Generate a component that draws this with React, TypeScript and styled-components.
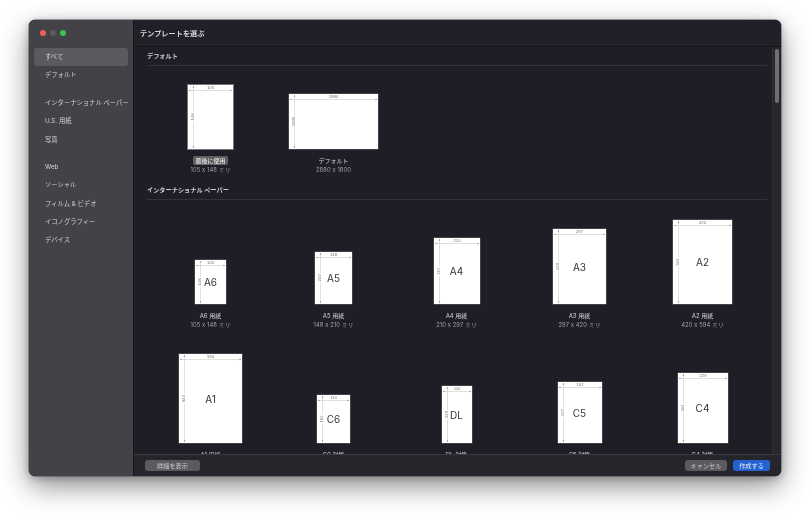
import React from 'react'
import styled, { createGlobalStyle } from 'styled-components'

type PaperSpec = {
  name?: string
  label: string
  size: string
  dimX: string
  dimY: string
  w: number
  h: number
  recent?: boolean
}

const GlobalStyle = createGlobalStyle`
  html, body {
    margin: 0;
    padding: 0;
    background: #fff;
    font-family: Inter, "Noto Sans CJK JP", "Liberation Sans", sans-serif;
  }
`

const Page = styled.div`
  width: 810px;
  height: 515px;
  box-sizing: border-box;
  padding: 20px 29px 39px;
  overflow: hidden;
`

const Window = styled.div`
  display: flex;
  height: 100%;
  border-radius: 6px;
  overflow: hidden;
  background: #1d1e26;
  box-shadow: 0 0 0 0.5px #55555a, 0 10px 28px rgba(0, 0, 0, 0.45), 0 2px 8px rgba(0, 0, 0, 0.25);
  filter: blur(0.4px);
  will-change: transform;
`

const Sidebar = styled.nav`
  flex: 0 0 105px;
  min-width: 0;
  width: 105px;
  display: flex;
  flex-direction: column;
  box-sizing: border-box;
  padding: 27.5px 5px 0;
  background: #434247;
  border-right: 1px solid #17171c;
  position: relative;
`

const Lights = styled.div`
  position: absolute;
  top: 10px;
  left: 11px;
  display: flex;
  gap: 4px;
`

const Light = styled.span<{ $color: string }>`
  width: 6px;
  height: 6px;
  border-radius: 50%;
  background: ${(p) => p.$color};
`

const NavItem = styled.div<{ $active?: boolean; $gap?: number }>`
  height: 18.3px;
  line-height: 18px;
  margin-top: ${(p) => p.$gap ?? 0}px;
  padding-left: 11px;
  border-radius: 3px;
  font-size: 6.3px;
  white-space: nowrap;
  color: #d2d2d4;
  background: ${(p) => (p.$active ? '#5b5a5f' : 'transparent')};
`

const Main = styled.main`
  flex: 1;
  min-width: 0;
  display: flex;
  flex-direction: column;
`

const Header = styled.header`
  flex: 0 0 27px;
  box-sizing: border-box;
  display: flex;
  align-items: center;
  padding-left: 6px;
  background: #1f2028;
  border-bottom: 1px solid #15151a;
  font-size: 7.2px;
  font-weight: 700;
  color: #d8d8da;
`

const Body = styled.div`
  flex: 1;
  min-height: 0;
  display: flex;
`

const Scroller = styled.div`
  flex: 1;
  min-width: 0;
  overflow: hidden;
`

const ScrollTrack = styled.div`
  flex: 0 0 8px;
  box-sizing: border-box;
  padding: 2px 2px 0;
  background: #26272c;
  border-left: 1px solid #303137;
`

const ScrollThumb = styled.div`
  width: 4px;
  height: 54px;
  border-radius: 2px;
  background: #707074;
`

const Section = styled.section<{ $gap?: number }>`
  margin: ${(p) => p.$gap ?? 0}px 5px 0 13px;
`

const SectionHead = styled.h2`
  margin: 0;
  height: 19px;
  box-sizing: border-box;
  line-height: 18px;
  border-bottom: 1px solid #32333a;
  font-size: 6.2px;
  font-weight: 700;
  color: #cdcdd0;
`

const CardGrid = styled.div<{ $top: number }>`
  display: grid;
  grid-template-columns: repeat(5, 123px);
  row-gap: 24px;
  align-items: end;
  padding: ${(p) => p.$top}px 0 0 2px;
`

const Card = styled.div`
  display: flex;
  flex-direction: column;
  align-items: center;
`

const Sheet = styled.div<{ $recent?: boolean }>`
  position: relative;
  box-sizing: border-box;
  background: #fff;
  box-shadow: 0 0 0 ${(p) => (p.$recent ? '1px #77777b' : '0.5px #66666a')};
`

const SheetName = styled.span`
  position: absolute;
  inset: 0;
  display: flex;
  align-items: center;
  justify-content: center;
  font-family: Inter, "Liberation Sans", sans-serif;
  font-size: 10px;
  color: #333;
`

const Caption = styled.div`
  margin-top: 6px;
  height: 10px;
  display: flex;
  align-items: center;
`

const CaptionText = styled.span<{ $recent?: boolean }>`
  font-size: 6px;
  line-height: 9px;
  font-weight: ${(p) => (p.$recent ? 500 : 400)};
  color: #d2d2d4;
  white-space: nowrap;
  ${(p) => p.$recent && 'padding: 0 2px; border-radius: 2px; background: #5f5f63; color: #e6e6e6;'}
`

const SizeText = styled.div`
  height: 10px;
  line-height: 10px;
  font-size: 5.8px;
  letter-spacing: 0.1px;
  color: #a0a0a4;
  white-space: nowrap;
`

const Footer = styled.footer`
  flex: 0 0 22px;
  box-sizing: border-box;
  display: flex;
  align-items: center;
  padding: 0 11px 0 11px;
  background: #25262c;
  border-top: 1px solid #3a3b40;
  position: relative;
`

const Button = styled.button<{ $primary?: boolean; $width: number }>`
  width: ${(p) => p.$width}px;
  height: 11px;
  padding: 0;
  border: 0;
  border-radius: 3px;
  font-family: inherit;
  font-size: 6.2px;
  line-height: 11px;
  color: ${(p) => (p.$primary ? '#e4ecfb' : '#c8c8ca')};
  background: ${(p) => (p.$primary ? '#2463cf' : '#5a5a5f')};
`

const Spacer = styled.div`
  flex: 1;
`

const ButtonGroup = styled.div`
  display: flex;
  gap: 6px;
`

const Guides = ({ w, h, dimX, dimY }: { w: number; h: number; dimX: string; dimY: string }) => {
  const o = 5.5
  return (
    <svg
      width={w}
      height={h}
      viewBox={`0 0 ${w} ${h}`}
      style={{ position: 'absolute', left: 0, top: 0 }}
    >
      <line x1={1} y1={o} x2={w - 1} y2={o} stroke="#d2d2d2" strokeWidth={0.7} />
      <line x1={o} y1={1} x2={o} y2={h - 1} stroke="#d2d2d2" strokeWidth={0.7} />
      <path d={`M1 ${o}l1.4 -.8v1.6z M${w - 1} ${o}l-1.4 -.8v1.6z`} fill="#777" />
      <path d={`M${o} 1l-.8 1.4h1.6z M${o} ${h - 1}l-.8 -1.4h1.6z`} fill="#777" />
      <text
        x={w / 2}
        y={4.2}
        textAnchor="middle"
        fontSize={4.2}
        fill="#777"
        fontFamily="Liberation Sans, sans-serif"
      >
        {dimX}
      </text>
      <g transform={`translate(${o - 0.6} ${h / 2}) rotate(-90)`}>
        <rect x={-5} y={-3} width={10} height={4} fill="#fff" />
        <text
          x={0}
          y={0.6}
          textAnchor="middle"
          fontSize={4.2}
          fill="#777"
          fontFamily="Liberation Sans, sans-serif"
        >
          {dimY}
        </text>
      </g>
    </svg>
  )
}

const PaperCard = ({ name, label, size, dimX, dimY, w, h, recent }: PaperSpec) => (
  <Card>
    <Sheet $recent={recent} style={{ width: w, height: h }}>
      <Guides w={w} h={h} dimX={dimX} dimY={dimY} />
      {name && <SheetName>{name}</SheetName>}
    </Sheet>
    <Caption>
      <CaptionText $recent={recent}>{label}</CaptionText>
    </Caption>
    <SizeText>{size}</SizeText>
  </Card>
)

const defaults: PaperSpec[] = [
  { label: '最後に使用', size: '105 x 148 ミリ', dimX: '105', dimY: '148', w: 45, h: 64, recent: true },
  { label: 'デフォルト', size: '2880 x 1800', dimX: '2880', dimY: '1800', w: 89, h: 55 },
]

const international: PaperSpec[] = [
  { name: 'A6', label: 'A6 用紙', size: '105 x 148 ミリ', dimX: '105', dimY: '148', w: 31, h: 44 },
  { name: 'A5', label: 'A5 用紙', size: '148 x 210 ミリ', dimX: '148', dimY: '210', w: 37, h: 52 },
  { name: 'A4', label: 'A4 用紙', size: '210 x 297 ミリ', dimX: '210', dimY: '297', w: 46, h: 66 },
  { name: 'A3', label: 'A3 用紙', size: '297 x 420 ミリ', dimX: '297', dimY: '420', w: 53, h: 75 },
  { name: 'A2', label: 'A2 用紙', size: '420 x 594 ミリ', dimX: '420', dimY: '594', w: 59, h: 84 },
  { name: 'A1', label: 'A1 用紙', size: '594 x 841 ミリ', dimX: '594', dimY: '841', w: 63, h: 89 },
  { name: 'C6', label: 'C6 封筒', size: '114 x 162 ミリ', dimX: '114', dimY: '162', w: 33, h: 48 },
  { name: 'DL', label: 'DL 封筒', size: '110 x 220 ミリ', dimX: '110', dimY: '220', w: 30, h: 57 },
  { name: 'C5', label: 'C5 封筒', size: '162 x 229 ミリ', dimX: '162', dimY: '229', w: 44, h: 61 },
  { name: 'C4', label: 'C4 封筒', size: '229 x 324 ミリ', dimX: '229', dimY: '324', w: 50, h: 70 },
]

const navItems = [
  { label: 'すべて', active: true },
  { label: 'デフォルト' },
  { label: 'インターナショナル ペーパー', gap: 10 },
  { label: 'U.S. 用紙' },
  { label: '写真' },
  { label: 'Web', gap: 9 },
  { label: 'ソーシャル' },
  { label: 'フィルム & ビデオ' },
  { label: 'イコノグラフィー' },
  { label: 'デバイス' },
]

export default function App() {
  return (
    <Page>
      <GlobalStyle />
      <Window>
        <Sidebar>
          <Lights>
            <Light $color="#ee5f57" />
            <Light $color="#5c5b60" />
            <Light $color="#3fc14b" />
          </Lights>
          {navItems.map((item) => (
            <NavItem key={item.label} $active={item.active} $gap={item.gap}>
              {item.label}
            </NavItem>
          ))}
        </Sidebar>
        <Main>
          <Header>テンプレートを選ぶ</Header>
          <Body>
            <Scroller>
              <Section>
                <SectionHead>デフォルト</SectionHead>
                <CardGrid $top={19}>
                  {defaults.map((p) => (
                    <PaperCard key={p.label} {...p} />
                  ))}
                </CardGrid>
              </Section>
              <Section $gap={6}>
                <SectionHead>インターナショナル ペーパー</SectionHead>
                <CardGrid $top={20}>
                  {international.map((p) => (
                    <PaperCard key={p.label} {...p} />
                  ))}
                </CardGrid>
              </Section>
            </Scroller>
            <ScrollTrack>
              <ScrollThumb />
            </ScrollTrack>
          </Body>
          <Footer>
            <Button $width={55}>詳細を表示</Button>
            <Spacer />
            <ButtonGroup>
              <Button $width={42}>キャンセル</Button>
              <Button $primary $width={37}>作成する</Button>
            </ButtonGroup>
          </Footer>
        </Main>
      </Window>
    </Page>
  )
}
